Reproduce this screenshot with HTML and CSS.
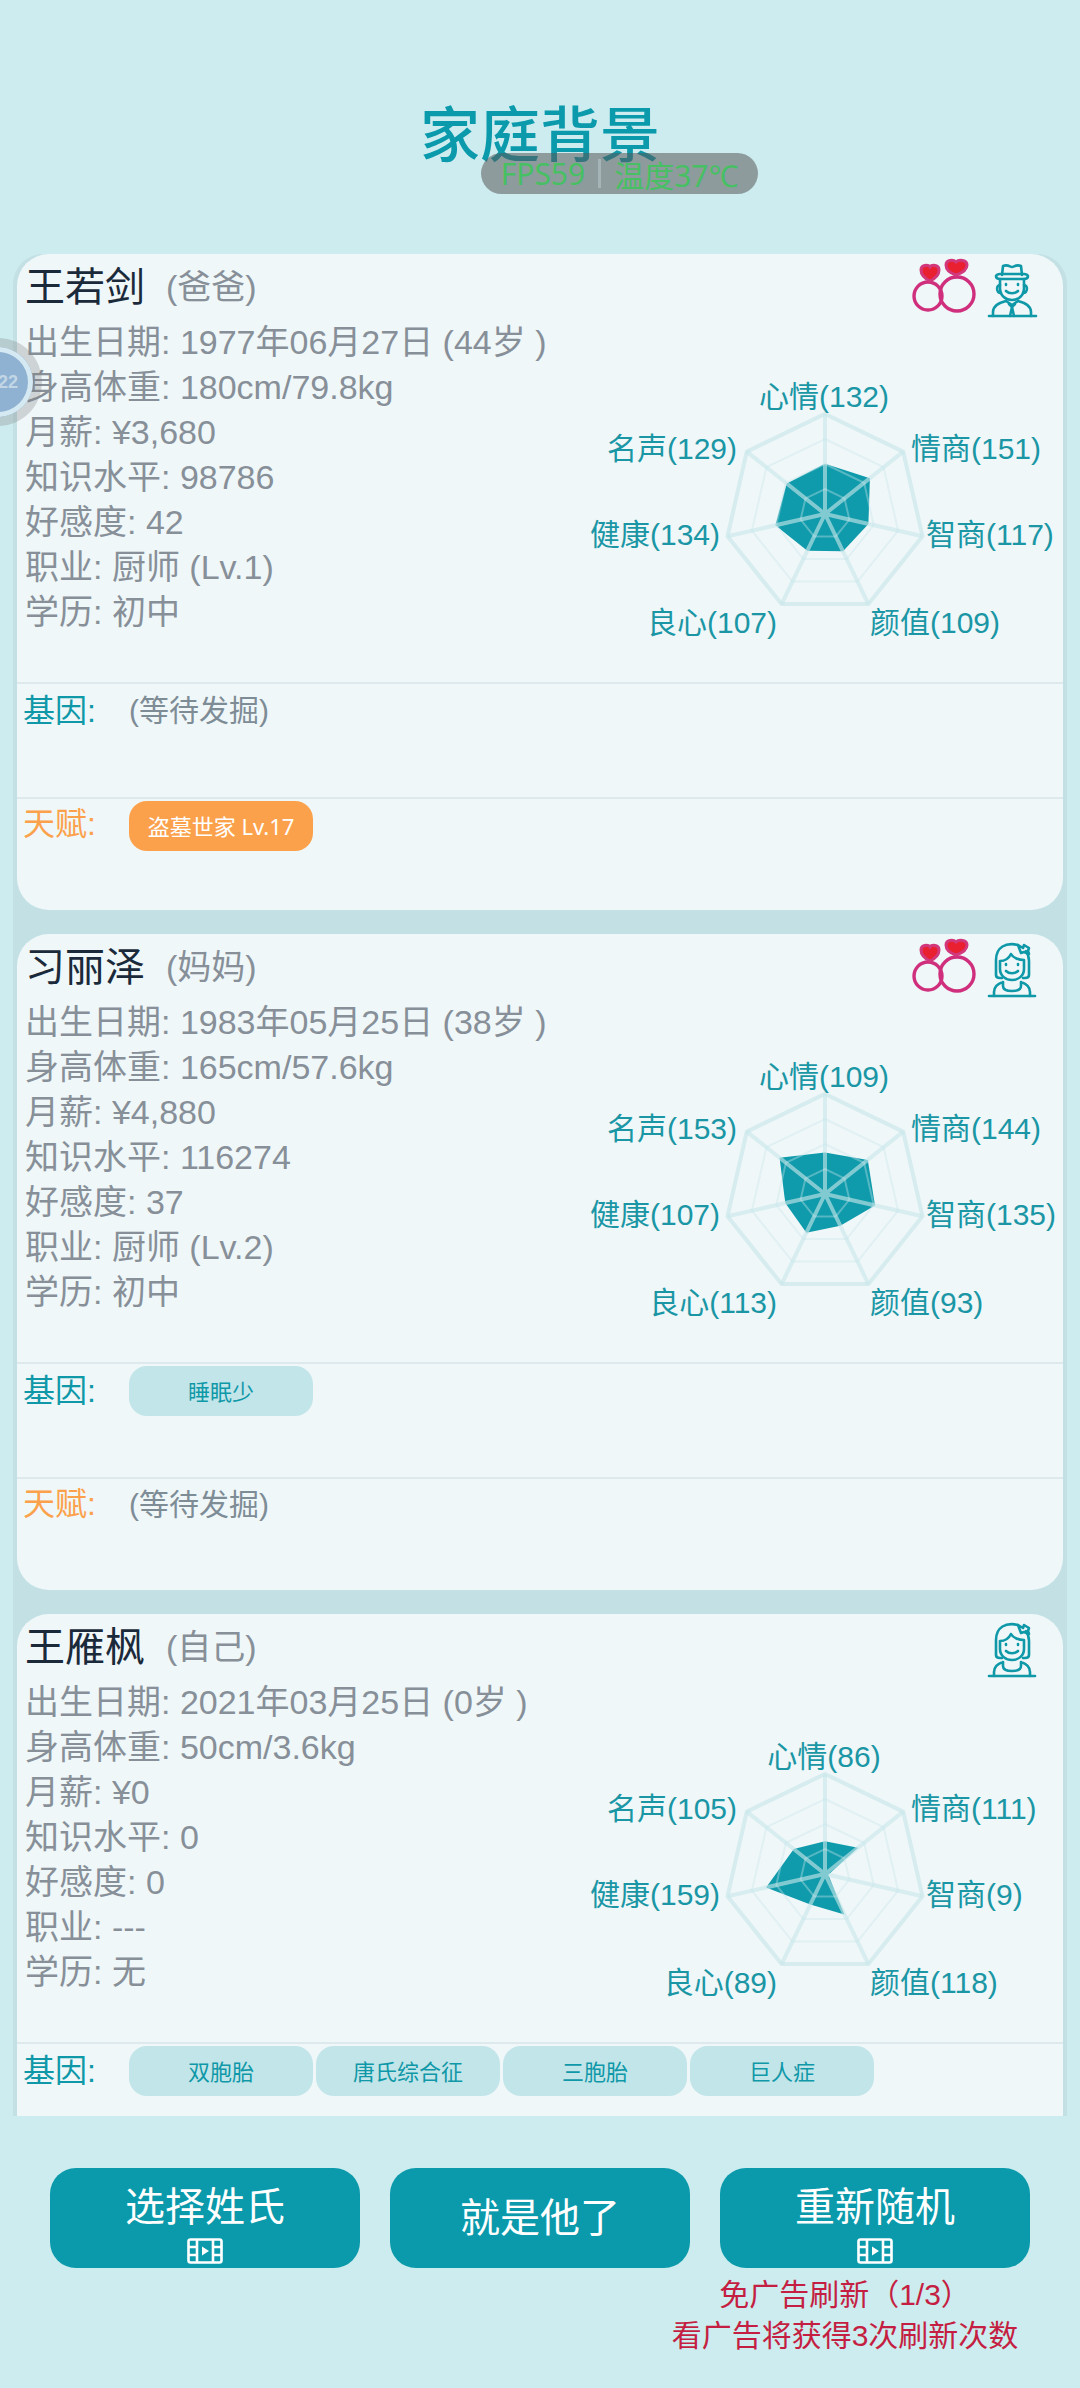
FILE: index.html
```html
<!DOCTYPE html>
<html lang="zh-CN">
<head>
    <meta charset="UTF-8">
    <title>家庭背景</title>
    <link rel="stylesheet" href="styles.css">
</head>
<body>
    <svg class="defs" width="0" height="0">
        <defs>
            <g id="grid">
                <polygon class="ring-outer" points="0,-100 78.2,-62.4 97.5,22.3 43.4,90.1 -43.4,90.1 -97.5,22.3 -78.2,-62.4"/>
                <polygon class="ring" points="0,-75 58.6,-46.8 73.1,16.7 32.5,67.6 -32.5,67.6 -73.1,16.7 -58.6,-46.8"/>
                <polygon class="ring" points="0,-50 39.1,-31.2 48.7,11.1 21.7,45 -21.7,45 -48.7,11.1 -39.1,-31.2"/>
                <polygon class="ring" points="0,-25 19.5,-15.6 24.4,5.6 10.8,22.5 -10.8,22.5 -24.4,5.6 -19.5,-15.6"/>
                <path class="axis" d="M0 0L0 -100M0 0L78.2 -62.4M0 0L97.5 22.3M0 0L43.4 90.1M0 0L-43.4 90.1M0 0L-97.5 22.3M0 0L-78.2 -62.4"/>
            </g>
            <g id="rings">
                <circle class="ring-band" cx="15" cy="37" r="14"/>
                <circle class="ring-band" cx="44" cy="35" r="17"/>
                <path class="ring-heart" d="M17 22c-6-3-9-6-9-11 0-5 7-6 9-3 2-3 9-2 9 3 0 5-3 8-9 11z"/>
                <path class="ring-heart" d="M43 16c-6-2-10-5-10-10 0-5 7-6 10-3 3-3 11-2 11 3 0 5-5 8-11 10z"/>
            </g>
            <g id="father">
                <path d="M1 53h47"/>
                <path d="M5 53v-4c0-6 5-9 13-11l6 4 6-4c8 2 13 5 13 11v4"/>
                <path d="M21 41l3 3 3-3M24 44l-2 9M24 44l2 9"/>
                <path d="M12 16v9c0 8 6 12 12 12s12-4 12-12v-9"/>
                <path d="M12 22c-4 0-4 8 1 8M36 22c4 0 4 8-1 8"/>
                <path d="M14 12l1-9c5-2 7 1 9 1s4-3 9-1l1 9"/>
                <path d="M8 13c0 2 2 3 4 3h24c2 0 4-1 4-3 0-1-2-2-4-2H12c-2 0-4 1-4 2z"/>
                <path d="M18 28c3 3 9 3 12 0"/>
                <path class="dot" d="M18 21v1M30 21v1"/>
            </g>
            <g id="woman">
                <path d="M1 53h46"/>
                <path d="M6 53v-4c0-5 3-8 9-10M42 53v-4c0-5-3-8-9-10M15 39v4c0 4 4 5 9 5s9-1 9-5v-4"/>
                <path d="M12 18v8c0 7 6 11 12 11s12-4 12-11v-9c-5 0-11-2-13-6-2 4-6 7-11 7z"/>
                <path d="M30 2C18-1 8 4 8 17v15c0 2 2 3 4 3h2M38 8c2 3 3 6 3 10v14c0 2-2 3-4 3h-2"/>
                <path d="M30 2l5 3 1-3 5 3-1 3 1 3-5-2-3 1z"/>
                <path d="M18 28c3 3 9 3 12 0"/>
                <path class="dot" d="M18 21v1M30 21v1"/>
            </g>
            <g id="film">
                <rect x="1.5" y="1.5" width="33" height="23" rx="2"/>
                <path d="M10 1.500v23M26 1.500v23M1.500 9H10M1.500 17H10M26 9h8.500M26 17h8.500"/>
                <path class="film-play" d="M15 8.500l7 4.500-7 4.500z"/>
            </g>
        </defs>
    </svg>

    <div class="float-ball"><span>22</span></div>

    <header class="top">
        <h1 class="title">家庭背景</h1>
        <div class="fps"><span>FPS59</span><i></i><span>温度37℃</span></div>
    </header>

    <main class="list">
        <section class="card">
            <div class="card-top">
                <div class="head">
                    <span class="name">王若剑</span>
                    <span class="relation">(爸爸)</span>
                    <svg class="icon-rings" viewBox="0 0 64 54"><use href="#rings"/></svg>
                    <svg class="icon-person" viewBox="0 0 49 54"><use href="#father"/></svg>
                </div>
                <div class="body">
                    <ul class="info">
                        <li>出生日期: 1977年06月27日 (44岁 )</li>
                        <li>身高体重: 180cm/79.8kg</li>
                        <li>月薪: ¥3,680</li>
                        <li>知识水平: 98786</li>
                        <li>好感度: 42</li>
                        <li>职业: 厨师 (Lv.1)</li>
                        <li>学历: 初中</li>
                    </ul>
                    <div class="radar">
                        <svg class="radar-svg" viewBox="-125 -125 250 250">
                            <polygon class="data" points="0,-50.2 44.9,-35.8 43.4,9.9 18,37.3 -17.7,36.700 -49.6,11.3 -38.3,-30.6"/>
                            <use href="#grid"/>
                        </svg>
                        <span class="lab lab-top">心情(132)</span>
                        <span class="lab lab-r1">情商(151)</span>
                        <span class="lab lab-r2">智商(117)</span>
                        <span class="lab lab-r3">颜值(109)</span>
                        <span class="lab lab-l3">良心(107)</span>
                        <span class="lab lab-l2">健康(134)</span>
                        <span class="lab lab-l1">名声(129)</span>
                    </div>
                </div>
            </div>
            <div class="row">
                <span class="row-label">基因:</span>
                <span class="wait">(等待发掘)</span>
            </div>
            <div class="row row-talent">
                <span class="row-label">天赋:</span>
                <span class="pill pill-orange">盗墓世家 Lv.17</span>
            </div>
        </section>

        <section class="card">
            <div class="card-top">
                <div class="head">
                    <span class="name">习丽泽</span>
                    <span class="relation">(妈妈)</span>
                    <svg class="icon-rings" viewBox="0 0 64 54"><use href="#rings"/></svg>
                    <svg class="icon-person" viewBox="0 0 49 54"><use href="#woman"/></svg>
                </div>
                <div class="body">
                    <ul class="info">
                        <li>出生日期: 1983年05月25日 (38岁 )</li>
                        <li>身高体重: 165cm/57.6kg</li>
                        <li>月薪: ¥4,880</li>
                        <li>知识水平: 116274</li>
                        <li>好感度: 37</li>
                        <li>职业: 厨师 (Lv.2)</li>
                        <li>学历: 初中</li>
                    </ul>
                    <div class="radar">
                        <svg class="radar-svg" viewBox="-125 -125 250 250">
                            <polygon class="data" points="0,-41.4 42.8,-34.1 50,11.4 15.3,31.8 -18.6,38.7 -39.7,9.1 -45.4,-36.2"/>
                            <use href="#grid"/>
                        </svg>
                        <span class="lab lab-top">心情(109)</span>
                        <span class="lab lab-r1">情商(144)</span>
                        <span class="lab lab-r2">智商(135)</span>
                        <span class="lab lab-r3">颜值(93)</span>
                        <span class="lab lab-l3">良心(113)</span>
                        <span class="lab lab-l2">健康(107)</span>
                        <span class="lab lab-l1">名声(153)</span>
                    </div>
                </div>
            </div>
            <div class="row">
                <span class="row-label">基因:</span>
                <span class="pill">睡眠少</span>
            </div>
            <div class="row row-talent">
                <span class="row-label">天赋:</span>
                <span class="wait">(等待发掘)</span>
            </div>
        </section>

        <section class="card">
            <div class="card-top">
                <div class="head">
                    <span class="name">王雁枫</span>
                    <span class="relation">(自己)</span>
                    <svg class="icon-person" viewBox="0 0 49 54"><use href="#woman"/></svg>
                </div>
                <div class="body">
                    <ul class="info">
                        <li>出生日期: 2021年03月25日 (0岁 )</li>
                        <li>身高体重: 50cm/3.6kg</li>
                        <li>月薪: ¥0</li>
                        <li>知识水平: 0</li>
                        <li>好感度: 0</li>
                        <li>职业: ---</li>
                        <li>学历: 无</li>
                    </ul>
                    <div class="radar">
                        <svg class="radar-svg" viewBox="-125 -125 250 250">
                            <polygon class="data" points="0,-32.7 33,-26.3 3.3,.8 19.4,40.4 -14.7,30.5 -58.9,13.4 -31.2,-24.9"/>
                            <use href="#grid"/>
                        </svg>
                        <span class="lab lab-top">心情(86)</span>
                        <span class="lab lab-r1">情商(111)</span>
                        <span class="lab lab-r2">智商(9)</span>
                        <span class="lab lab-r3">颜值(118)</span>
                        <span class="lab lab-l3">良心(89)</span>
                        <span class="lab lab-l2">健康(159)</span>
                        <span class="lab lab-l1">名声(105)</span>
                    </div>
                </div>
            </div>
            <div class="row">
                <span class="row-label">基因:</span>
                <span class="pill">双胞胎</span>
                <span class="pill">唐氏综合征</span>
                <span class="pill">三胞胎</span>
                <span class="pill">巨人症</span>
            </div>
        </section>
    </main>

    <div class="actions">
        <button class="btn btn-side">
            <span>选择姓氏</span>
            <svg class="film" viewBox="0 0 36 26"><use href="#film"/></svg>
        </button>
        <button class="btn btn-mid"><span>就是他了</span></button>
        <div class="refresh">
            <button class="btn btn-side">
                <span>重新随机</span>
                <svg class="film" viewBox="0 0 36 26"><use href="#film"/></svg>
            </button>
            <p class="tip tip-free">免广告刷新（1/3）</p>
            <p class="tip">看广告将获得3次刷新次数</p>
        </div>
    </div>
</body>
</html>
```

FILE: styles.css
```css
* {
    box-sizing: border-box;
}

html, body {
    margin: 0;
    padding: 0;
}

body {
    position: relative;
    width: 1080px;
    height: 2388px;
    overflow: hidden;
    background-color: #cdecef;
    font-family: 'Liberation Sans', 'Noto Sans CJK SC', sans-serif;
}

.defs {
    position: absolute;
}

/* floating ball on the left edge */
.float-ball {
    position: absolute;
    left: -46px;
    top: 338px;
    z-index: 5;
    width: 88px;
    height: 88px;
    border-radius: 50%;
    border: 9px solid rgba(130, 130, 130, 0.3);
    background-color: #8fb2d2;
    background-clip: padding-box;
    box-shadow: inset 0 0 0 5px #d5e9f3;
    display: flex;
    align-items: center;
    justify-content: flex-end;
    padding-right: 15px;
}

.float-ball span {
    font-size: 18px;
    font-weight: bold;
    color: #c2d6e6;
}

/* header */
.top {
    position: relative;
    height: 254px;
    padding-top: 95px;
}

.title {
    margin: 0;
    text-align: center;
    font-size: 60px;
    line-height: 84px;
    font-weight: 500;
    color: #0a9aab;
}

.fps {
    position: absolute;
    left: 481px;
    top: 153px;
    width: 277px;
    height: 41px;
    border-radius: 21px;
    background-color: rgba(90, 90, 90, 0.55);
    display: flex;
    align-items: center;
    justify-content: center;
    gap: 13px;
    font-family: 'Noto Sans', 'Noto Sans CJK SC', sans-serif;
    font-size: 30px;
    color: #46c062;
}

.fps i {
    width: 3px;
    height: 29px;
    background-color: #a5b5b7;
}

/* card list */
.list {
    height: 1862px;
    margin: 0 13px;
    padding: 0 4px;
    overflow: hidden;
    background-color: #c3e1e5;
    border-radius: 30px 30px 0 0;
    display: flex;
    flex-direction: column;
    gap: 24px;
}

.card {
    flex-shrink: 0;
    height: 656px;
    border-radius: 32px;
    background-color: #eff7f9;
}

.card:last-child {
    border-radius: 32px 32px 0 0;
}

.card-top {
    height: 428px;
}

.head {
    display: flex;
    align-items: center;
    height: 60px;
    padding-left: 8px;
}

.name {
    font-size: 40px;
    color: #1b2a3a;
}

.relation {
    margin-left: 21px;
    font-size: 34px;
    color: #878f98;
}

.icon-rings {
    width: 64px;
    height: 54px;
    margin: 4px 0 0 auto;
    overflow: visible;
}

.icon-person {
    width: 49px;
    height: 54px;
    margin: 12px 26px 0 11px;
    overflow: visible;
    fill: none;
    stroke: #0f98a8;
    stroke-width: 2.6;
    stroke-linecap: round;
    stroke-linejoin: round;
}

.head .relation + .icon-person {
    margin-left: auto;
}

.ring-band {
    fill: none;
    stroke: #cf2f7c;
    stroke-width: 3.4;
}

.ring-heart {
    fill: #e8202f;
    stroke: #d2387c;
    stroke-width: 3;
}

.body {
    display: flex;
    justify-content: space-between;
    margin-top: 6px;
}

.info {
    margin: 0;
    padding: 0 0 0 8px;
    list-style: none;
    font-size: 34px;
    line-height: 45px;
    white-space: nowrap;
    color: #878f98;
}

/* radar chart */
.radar {
    position: relative;
    width: 483px;
    height: 270px;
    margin-top: 50px;
    flex-shrink: 0;
    color: #1a96a5;
    font-size: 30px;
    line-height: 36px;
    white-space: nowrap;
}

.radar-svg {
    position: absolute;
    left: 120px;
    top: 19px;
    width: 250px;
    height: 250px;
}

.data {
    fill: #0f9bab;
}

.ring-outer {
    fill: none;
    stroke: #c8e6ea;
    stroke-opacity: 0.65;
    stroke-width: 4;
}

.ring {
    fill: none;
    stroke: #c8e6ea;
    stroke-opacity: 0.38;
    stroke-width: 2;
}

.axis {
    fill: none;
    stroke: #c8e6ea;
    stroke-opacity: 0.62;
    stroke-width: 4;
}

.lab {
    position: absolute;
}

.lab-top { left: 244px; top: 9px; transform: translateX(-50%); }
.lab-r1 { left: 331px; top: 61px; }
.lab-r2 { left: 346px; top: 147px; }
.lab-r3 { left: 290px; top: 235px; }
.lab-l3 { right: 286px; top: 235px; }
.lab-l2 { right: 343px; top: 147px; }
.lab-l1 { right: 326px; top: 61px; }

/* gene and talent rows */
.row {
    display: flex;
    align-items: flex-start;
    gap: 3px;
    height: 115px;
    padding: 2px 0 0 6px;
    border-top: 2px solid #dde9ec;
}

.row-talent {
    height: 113px;
}

.row-label {
    width: 103px;
    font-size: 32px;
    line-height: 50px;
    color: #0f98a8;
}

.row-talent .row-label {
    line-height: 46px;
    color: #fca14b;
}

.wait {
    font-size: 30px;
    line-height: 50px;
    color: #7e8c96;
}

.row-talent .wait {
    line-height: 47px;
}

.pill {
    width: 184px;
    height: 50px;
    border-radius: 18px;
    background-color: #c2e5e9;
    font-family: 'Noto Sans', 'Noto Sans CJK SC', sans-serif;
    font-size: 22px;
    line-height: 50px;
    text-align: center;
    color: #0f98a8;
}

.pill-orange {
    background-color: #fca14b;
    color: #fff;
}

/* bottom buttons */
.actions {
    display: flex;
    align-items: flex-start;
    gap: 30px;
    margin-top: 52px;
    padding-left: 50px;
}

.btn {
    display: flex;
    flex-direction: column;
    align-items: center;
    justify-content: center;
    height: 100px;
    padding: 0;
    border: none;
    border-radius: 26px;
    background-color: #0a9aab;
    color: #fff;
    font-family: inherit;
    font-size: 40px;
    line-height: 50px;
}

.btn-side {
    width: 310px;
    padding-top: 10px;
}

.btn-mid {
    width: 300px;
}

.film {
    width: 36px;
    height: 26px;
    margin-top: 6px;
    fill: none;
    stroke: #fff;
    stroke-width: 2.6;
}

.film-play {
    fill: #fff;
    stroke: none;
}

.refresh {
    width: 310px;
}

.tip {
    width: 370px;
    margin: 0 0 0 -60px;
    text-align: center;
    font-size: 30px;
    line-height: 41px;
    color: #c41f42;
}

.tip-free {
    margin-top: 6px;
}
```
